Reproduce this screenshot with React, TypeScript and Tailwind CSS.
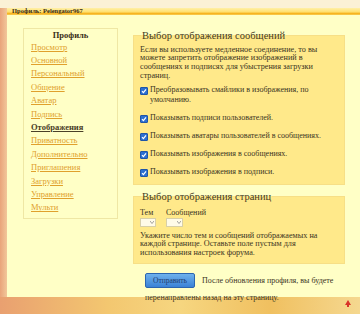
import React from "react";

const links = [
  "Просмотр",
  "Основной",
  "Персональный",
  "Общение",
  "Аватар",
  "Подпись",
  "Отображения",
  "Приватность",
  "Дополнительно",
  "Приглашения",
  "Загрузки",
  "Управление",
  "Мульти",
];

function Check({ label }: { label: React.ReactNode }) {
  return (
    <div className="flex items-start gap-[2px]">
      <span className="mt-[2px] flex h-[8px] w-[8px] shrink-0 items-center justify-center rounded-[1px] bg-[#2c6fd1] border border-[#1f55a8]">
        <svg width="6" height="6" viewBox="0 0 6 6">
          <path d="M1 3.2 L2.4 4.6 L5 1.4" stroke="#fff" strokeWidth="1.2" fill="none" />
        </svg>
      </span>
      <span className="leading-[10px]">{label}</span>
    </div>
  );
}

export default function App() {
  return (
    <div
      className="relative flex h-[314px] w-[360px] flex-col overflow-hidden text-[#3b3422]"
      style={{ fontFamily: '"Liberation Serif", serif' }}
    >
      <div className="absolute inset-0 bg-[linear-gradient(90deg,#e9a47a_0px,#f2c79a_7px,#fff3c8_8px)]" />
      <div className="absolute inset-x-0 bottom-0 h-[17px] bg-[linear-gradient(90deg,#e9a070,#f3c770_30%,#f6d680_50%,#f0c060_75%,#f5d890)]" />
      <div className="absolute inset-x-0 top-0 h-[8px] bg-[#fbf1d6]" />
      <div className="relative ml-[7px] mt-[8px] flex h-[289px] flex-col bg-[#ffffc6]">
        <div className="flex h-[11px] items-center bg-[linear-gradient(180deg,#fff0a8_0%,#ffe070_55%,#f6b21c_80%,#f9cf5a_100%)] pl-[5px]">
          <span className="text-[6.5px] font-bold leading-none text-[#3a2a10]">Профиль: Pelengator967</span>
        </div>
        <div className="flex gap-[15px] pl-[16px] pt-[13px]">
          <div className="flex h-[191px] w-[95px] flex-col border border-[#efe7a4] pl-[7px] pt-[1px]">
            <div className="pr-[7px] text-center text-[8.5px] font-bold leading-[11px] text-[#3a2f18]">Профиль</div>
            <div className="flex flex-col">
              {links.map((l) => (
                <a
                  key={l}
                  className={
                    "text-[8.5px] leading-[13.4px] underline " +
                    (l === "Отображения" ? "font-bold text-[#4a4028]" : "text-[#e0a02c]")
                  }
                >
                  {l}
                </a>
              ))}
            </div>
          </div>
          <div className="mt-[2px] flex w-[212px] flex-col">
            <fieldset className="h-[155px] border border-[#f7df86] bg-[#ffe98a] pl-[6px] pr-[4px]">
              <legend className="ml-[1px] px-[1px] text-[10.5px] leading-[12px] text-[#463b24]">
                Выбор отображения сообщений
              </legend>
              <p className="mt-[4px] text-[8.2px] leading-[8.7px]">
                Если вы используете медленное соединение, то вы можете запретить отображение изображений в сообщениях и подписях для убыстрения загрузки страниц.
              </p>
              <div className="mt-[5px] flex flex-col gap-[8px] text-[8px]">
                <Check label="Преобразовывать смайлики в изображения, по умолчанию." />
                <Check label="Показывать подписи пользователей." />
                <Check label="Показывать аватары пользователей в сообщениях." />
                <Check label="Показывать изображения в сообщениях." />
                <Check label="Показывать изображения в подписи." />
              </div>
            </fieldset>
            <fieldset className="mt-[6px] h-[73px] border border-[#f7df86] bg-[#ffe98a] pl-[6px] pr-[4px]">
              <legend className="ml-[1px] px-[1px] text-[10.5px] leading-[12px] text-[#463b24]">
                Выбор отображения страниц
              </legend>
              <div className="mt-[5px] flex gap-[10px] text-[8px] leading-[9px]">
                <div className="flex flex-col">
                  <span>Тем</span>
                  <span className="mt-[1px] flex h-[9px] w-[16px] items-center justify-end border border-[#d8d0a8] bg-[#fffbe8] pr-[1px]">
                    <svg width="4" height="3" viewBox="0 0 4 3"><path d="M0 0 L2 2.5 L4 0" fill="none" stroke="#8a8a8a" strokeWidth="0.8" /></svg>
                  </span>
                </div>
                <div className="flex flex-col">
                  <span>Сообщений</span>
                  <span className="mt-[1px] flex h-[9px] w-[17px] items-center justify-end border border-[#d8d0a8] bg-[#fffbe8] pr-[1px]">
                    <svg width="4" height="3" viewBox="0 0 4 3"><path d="M0 0 L2 2.5 L4 0" fill="none" stroke="#8a8a8a" strokeWidth="0.8" /></svg>
                  </span>
                </div>
              </div>
              <p className="mt-[5px] text-[8.2px] leading-[8.7px]">
                Укажите число тем и сообщений отображаемых на каждой странице. Оставьте поле пустым для использования настроек форума.
              </p>
            </fieldset>
            <div className="mt-[9px] flex flex-col pl-[12px] text-[8px] leading-[16px]">
              <div className="flex items-center gap-[7px]">
                <button className="h-[15px] w-[50px] shrink-0 rounded-[2px] border border-[#2b65b0] bg-[linear-gradient(180deg,#6fb1ec,#3a82d6)] text-[7.5px] leading-[13px] text-[#1c3c70]">
                  Отправить
                </button>
                <span>После обновления профиля, вы будете</span>
              </div>
              <span className="mt-[1px]">перенаправлены назад на эту страницу.</span>
            </div>
          </div>
        </div>
        <svg className="absolute bottom-[-10px] right-[9px]" width="6" height="7" viewBox="0 0 6 7">
          <path d="M3 0 L6 5 L0 5 Z" fill="#d8342a" />
          <rect x="2" y="5" width="2" height="2" fill="#d8342a" />
        </svg>
      </div>
    </div>
  );
}
